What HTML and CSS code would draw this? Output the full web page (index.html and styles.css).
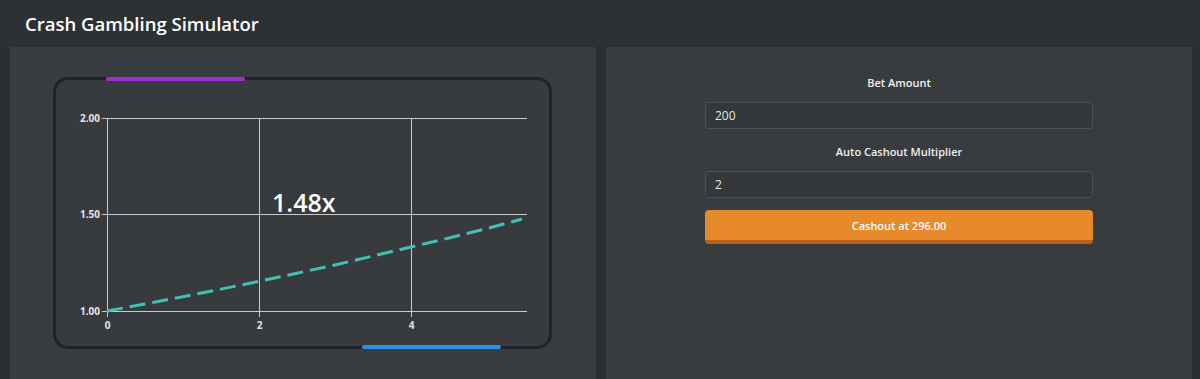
FILE: index.html
```html
<!DOCTYPE html>
<html lang="en">
<head>
<meta charset="utf-8">
<title>Crash Gambling Simulator</title>
<link rel="stylesheet" href="styles.css">
</head>
<body>
<header class="topbar">
  <h1 class="title">Crash Gambling Simulator</h1>
</header>
<main class="layout">
  <section class="panel panel-chart">
    <div class="chart-box">
      <span class="bar bar-top"></span>
      <span class="bar bar-bottom"></span>
      <svg class="chart" width="493" height="266" viewBox="0 0 493 266">
        <g class="grid">
          <line x1="46" y1="38.5" x2="471" y2="38.5"/>
          <line x1="46" y1="134.5" x2="471" y2="134.5"/>
          <line x1="46" y1="231.5" x2="471" y2="231.5"/>
          <line x1="51.5" y1="38" x2="51.5" y2="237"/>
          <line x1="203.5" y1="38" x2="203.5" y2="237"/>
          <line x1="355.5" y1="38" x2="355.5" y2="237"/>
        </g>
        <g class="ylabels">
          <text x="44" y="42">2.00</text>
          <text x="44" y="138">1.50</text>
          <text x="44" y="235">1.00</text>
        </g>
        <g class="xlabels">
          <text x="51.5" y="249">0</text>
          <text x="203.5" y="249">2</text>
          <text x="355.5" y="249">4</text>
        </g>
        <polyline class="curve" points="51,231 89,224 127,216.7 165,209.1 203,201.3 241,193.2 279,185 317,176 355,167 393,158 431,148.5 466,139"/>
      </svg>
      <div class="multiplier">1.48x</div>
    </div>
  </section>
  <section class="panel panel-form">
    <label class="field-label" for="bet">Bet Amount</label>
    <input class="field" id="bet" type="text" value="200">
    <label class="field-label" for="auto">Auto Cashout Multiplier</label>
    <input class="field field-last" id="auto" type="text" value="2">
    <button class="cashout" type="button">Cashout at 296.00</button>
  </section>
</main>
</body>
</html>
```

FILE: styles.css
```css
* { box-sizing: border-box; }

html, body {
  margin: 0;
  height: 100%;
}

body {
  background: #2c2f32;
  font-family: "Open Sans", "Liberation Sans", sans-serif;
  color: #f2f2f2;
  overflow: hidden;
}

.topbar {
  height: 47px;
  padding: 0 25px;
  display: flex;
  align-items: center;
  background: #2e3134;
}

.title {
  margin: 0;
  font-size: 18.5px;
  font-weight: 600;
  color: #ffffff;
}

.layout {
  display: grid;
  grid-template-columns: minmax(0, 1fr) minmax(0, 1fr);
  gap: 10px;
  padding: 0 8px 0 10px;
  height: calc(100% - 47px);
}

.panel {
  min-width: 0;
  background: #383c3f;
}

.panel-chart {
  padding: 30px 44px 0 43px;
}

.chart-box {
  position: relative;
  width: 499px;
  height: 272px;
  border: 3px solid #202326;
  border-radius: 15px;
  background: #373b3e;
}

.chart {
  display: block;
}

.grid line {
  stroke: #c9c9c9;
  stroke-width: 1;
}

.ylabels text,
.xlabels text {
  font-family: "Open Sans", "Liberation Sans", sans-serif;
  font-size: 10px;
  font-weight: 700;
  fill: #e4e4e4;
}

.ylabels text { text-anchor: end; }
.xlabels text { text-anchor: middle; }

.curve {
  fill: none;
  stroke: #3fc1b8;
  stroke-width: 3;
  stroke-dasharray: 16 7;
}

.multiplier {
  position: absolute;
  left: 216px;
  top: 110px;
  font-size: 25px;
  font-weight: 600;
  color: #ffffff;
  line-height: 1;
}

.bar {
  position: absolute;
  height: 4px;
  width: 139px;
  border-radius: 2px;
}

.bar-top {
  top: -3px;
  left: 50px;
  background: #9c30d6;
}

.bar-bottom {
  bottom: -3px;
  left: 306px;
  background: #2f8fe4;
}

.panel-form {
  display: flex;
  flex-direction: column;
  align-items: center;
  padding-top: 28px;
}

.field-label {
  font-size: 11px;
  font-weight: 600;
  color: #f0f0f0;
  line-height: 15px;
  margin-bottom: 12px;
}

.field {
  width: 388px;
  height: 27px;
  margin: 0 0 15px 0;
  padding: 0 9px;
  background: #34383b;
  border: 1px solid #4c5054;
  border-radius: 3px;
  color: #e6e6e6;
  font-family: "Open Sans", "Liberation Sans", sans-serif;
  font-size: 12px;
  outline: none;
}

.field-last { margin-bottom: 12px; }

.cashout {
  width: 388px;
  height: 34px;
  border: 0;
  border-bottom: 4px solid #b9621a;
  border-radius: 4px;
  background: #e68a2b;
  color: #ffffff;
  font-family: "Open Sans", "Liberation Sans", sans-serif;
  font-size: 11px;
  font-weight: 600;
  padding: 0;
}
```
